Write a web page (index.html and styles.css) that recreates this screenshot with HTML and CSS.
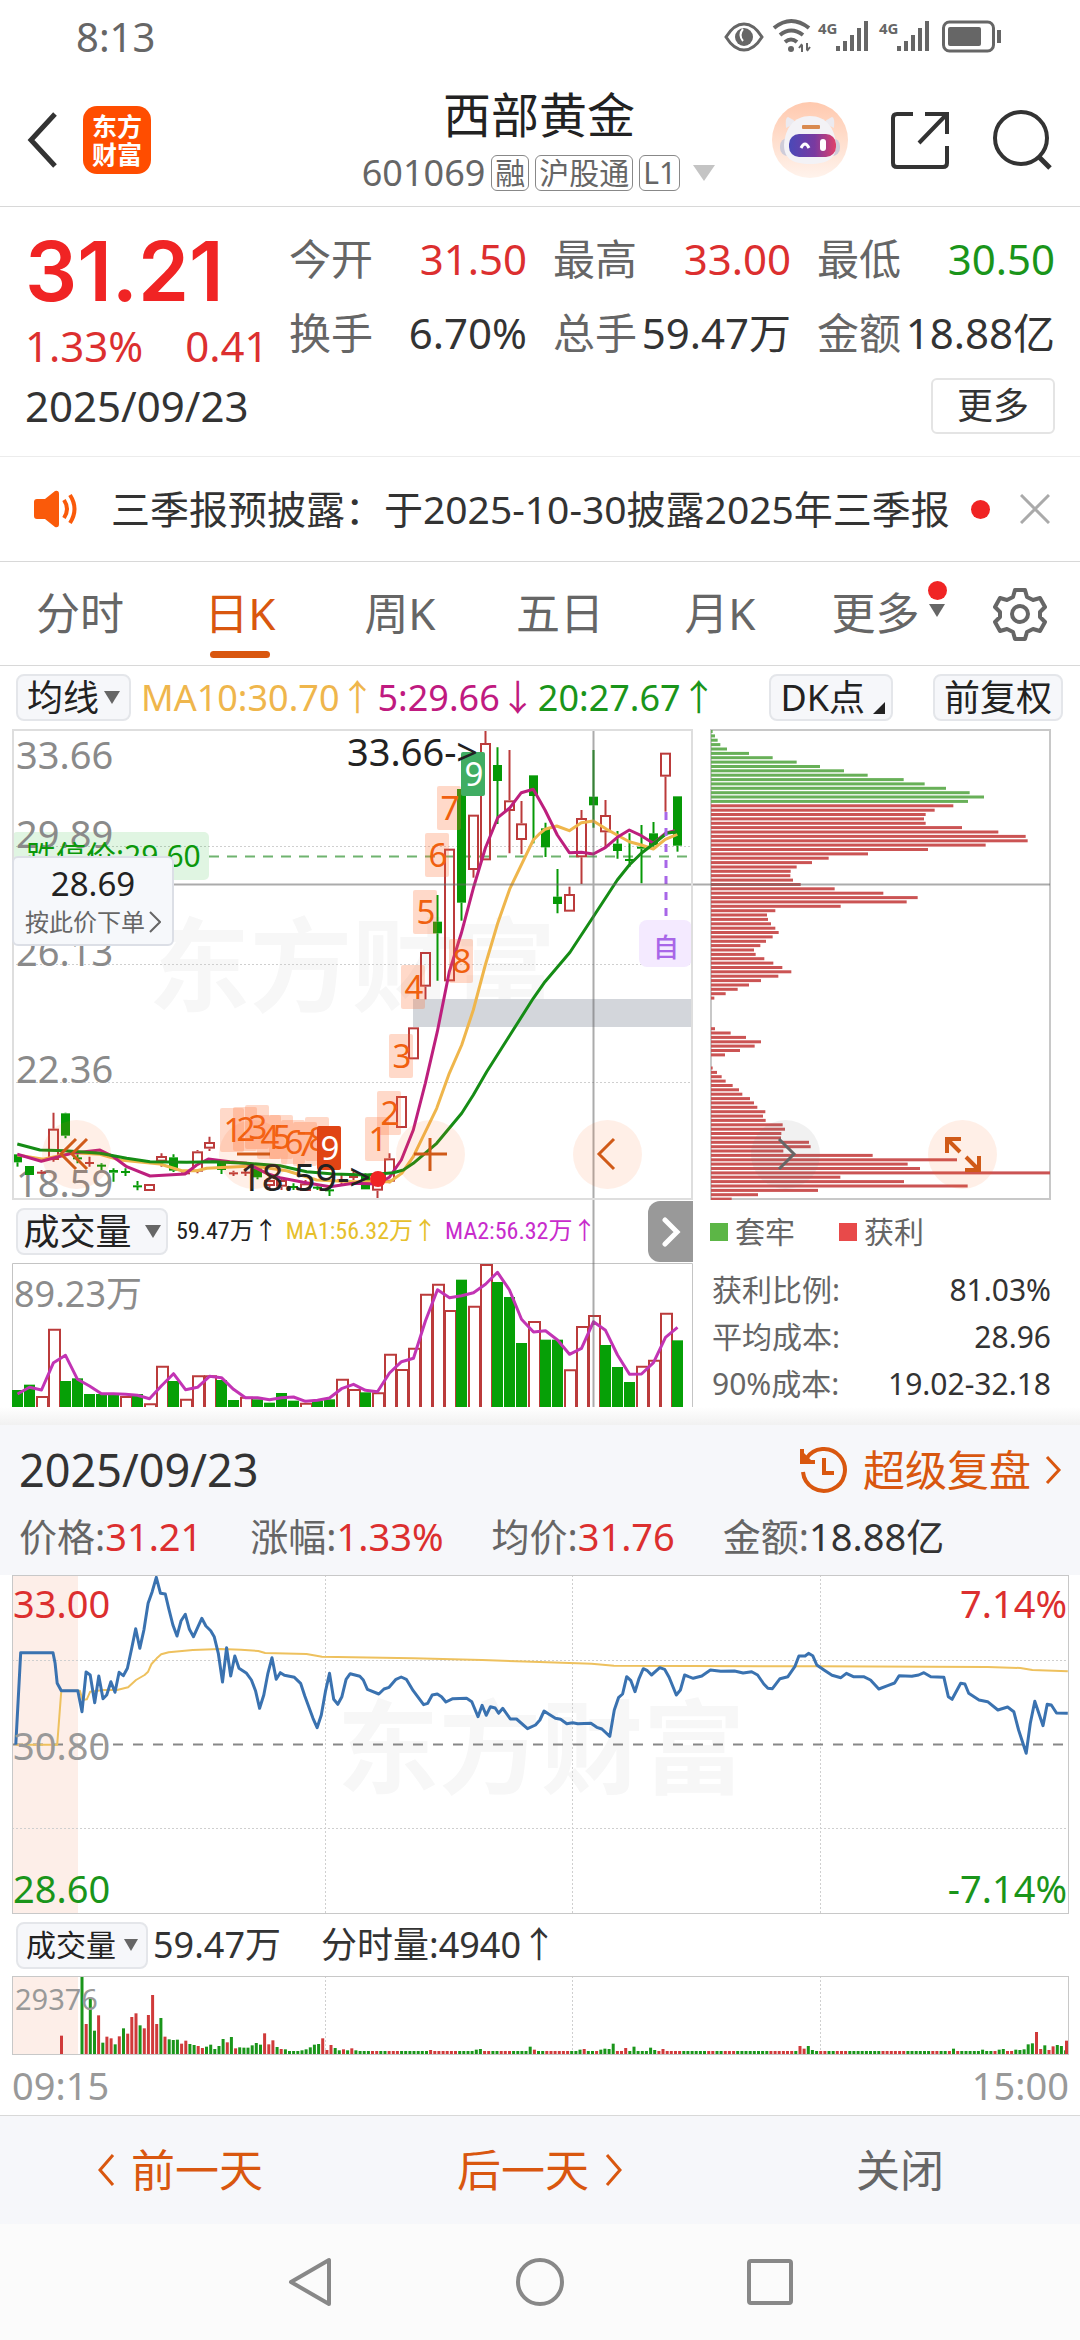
FILE: index.html
```html
<!DOCTYPE html>
<html lang="zh-CN">
<head>
<meta charset="utf-8">
<meta name="viewport" content="width=device-width, initial-scale=1">
<title>西部黄金 601069</title>
<link rel="stylesheet" href="styles.css">
</head>
<body>
<div class="status">
  <span class="status-time">8:13</span>
  <svg class="status-icons" width="278" height="40" viewBox="724 17 278 40" fill="none" stroke="#666" stroke-width="3">
    <path d="M726 37Q734 24 744 24T762 37Q754 50 744 50T726 37Z"/><circle cx="744" cy="37" r="9" fill="#666" stroke="none"/><path d="M743 29q-5 6 0 12" stroke="#fff" stroke-width="2"/>
    <path d="M774 28q17-14 35 0M780 35q11-9 23 0M785 42q6-5 12 0" stroke-width="4"/><circle cx="791" cy="49" r="3" fill="#666" stroke="none"/><path d="M802 45v7m-3-4 3-4M807 43v7m3-3-3 4" stroke-width="2"/>
    <path d="M838 46v5M845 41v10M852 35v16M859 28v23M866 21v30" stroke-width="4"/>
    <path d="M899 46v5M906 41v10M913 35v16M920 28v23M927 21v30" stroke-width="4"/>
    <g fill="#666" stroke="none" font-size="15" font-weight="700"><text x="818" y="34">4G</text><text x="879" y="34">4G</text></g>
    <rect x="943.500" y="22" width="50" height="29" rx="6"/><rect x="948" y="27" width="33" height="19" rx="2" fill="#666" stroke="none"/><path d="M999 30v13" stroke-width="4"/>
  </svg>
</div>

<header class="head">
  <button class="icon-btn back" aria-label="返回"><svg width="34" height="58" viewBox="0 0 34 58" fill="none" stroke="#333" stroke-width="5"><path d="M29 3 5 29l24 26"/></svg></button>
  <a class="logo" href="#">东方<br>财富</a>
  <div class="title">
    <h1>西部黄金</h1>
    <div class="sub"><span class="code">601069</span><span class="tag">融</span><span class="tag">沪股通</span><span class="tag">L1</span><svg width="24" height="16" viewBox="0 0 24 16"><path d="M1 0h22L12 16z" fill="#c4c4c4"/></svg></div>
  </div>
  <div class="head-actions">
    <button class="icon-btn" aria-label="智能助手"><svg width="76" height="76" viewBox="0 0 76 76">
      <defs><linearGradient id="bg" x1="0" y1="0" x2="0" y2="1"><stop offset="0" stop-color="#ffc9ae"/><stop offset="1" stop-color="#fff3ec"/></linearGradient><linearGradient id="face" x1="0" y1="0" x2="1" y2="0"><stop offset="0" stop-color="#4a49b8"/><stop offset=".55" stop-color="#7a3aa0"/><stop offset="1" stop-color="#e0406a"/></linearGradient></defs>
      <circle cx="38" cy="38" r="38" fill="url(#bg)"/>
      <path d="M14 26q-1-11 2-11 5 2 8 6zM62 26q1-11-2-11-5 2-8 6z" fill="#eceaf0"/>
      <rect x="8" y="36" width="60" height="18" rx="8" fill="#cfccd9"/>
      <path d="M38 14c16 0 25 12 26 29 0 13-8 19-26 19s-26-6-26-19c1-17 10-29 26-29z" fill="#f3f2f6"/>
      <rect x="30" y="23" width="18" height="4" rx="1" fill="#d98a50"/>
      <rect x="17" y="32" width="47" height="23" rx="10" fill="url(#face)"/>
      <path d="M29 46q4-8 8 0" fill="none" stroke="#fff" stroke-width="3"/><rect x="48" y="37" width="6" height="12" rx="3" fill="#fff"/>
    </svg></button>
    <button class="icon-btn" aria-label="分享"><svg width="60" height="60" viewBox="0 0 60 60" fill="none" stroke="#333" stroke-width="4"><path d="M23 4H7q-4 0-4 4v45q0 4 4 4h46q4 0 4-4V36M35 4h22v20M56 5 29 33"/></svg></button>
    <button class="icon-btn" aria-label="搜索"><svg width="60" height="60" viewBox="0 0 60 60" fill="none" stroke="#333" stroke-width="4"><circle cx="29" cy="28" r="26"/><path d="m47 47 11 11" stroke-width="5"/></svg></button>
  </div>
</header>

<section class="quote">
  <div class="quote-main">
    <div>
      <div class="price">31.21</div>
      <div class="change"><span>1.33%</span><span>0.41</span></div>
    </div>
    <dl class="facts">
      <div><dt>今开</dt><dd class="up">31.50</dd></div>
      <div><dt>最高</dt><dd class="up">33.00</dd></div>
      <div><dt>最低</dt><dd class="down">30.50</dd></div>
      <div><dt>换手</dt><dd>6.70%</dd></div>
      <div><dt>总手</dt><dd>59.47万</dd></div>
      <div><dt>金额</dt><dd>18.88亿</dd></div>
    </dl>
  </div>
  <div class="quote-foot"><time>2025/09/23</time><button class="more">更多</button></div>
</section>

<section class="news">
  <svg width="46" height="38" viewBox="0 0 46 38"><path d="M1 12q0-3 3-3h8L22 1q4-1 4 3v30q0 4-4 3l-10-8H4q-3 0-3-3z" fill="#fa5a0a"/><path d="M31 10q6 9 0 18M37 5q9 14 0 28" fill="none" stroke="#fa5a0a" stroke-width="4"/></svg>
  <a href="#">三季报预披露：于2025-10-30披露2025年三季报</a>
  <i class="dot"></i>
  <button class="icon-btn" aria-label="关闭公告"><svg width="30" height="30" viewBox="0 0 30 30"><path d="m1 1 28 28M29 1 1 29" stroke="#aaa" stroke-width="3"/></svg></button>
</section>

<nav class="tabs">
  <button>分时</button><button class="on">日K</button><button>周K</button><button>五日</button><button>月K</button>
  <button class="tab-more">更多<span class="marks"><i class="dot"></i><svg width="16" height="13" viewBox="0 0 16 13"><path d="M0 0h16L8 13z" fill="#666"/></svg></span></button>
  <button aria-label="设置"><svg width="54" height="54" viewBox="0 0 54 54" fill="none" stroke="#666" stroke-width="4" stroke-linejoin="round"><path d="M22 3h10l2 7 6 3 7-2 5 9-5 5v5l5 5-5 9-7-2-6 3-2 7H22l-2-7-6-3-7 2-5-9 5-5v-5l-5-5 5-9 7 2 6-3z"/><circle cx="27" cy="27" r="8"/></svg></button>
</nav>

<div class="ma">
  <button class="chip">均线<svg width="16" height="13" viewBox="0 0 16 13"><path d="M0 0h16L8 13z" fill="#666"/></svg></button>
  <span class="ma-values"><span class="c10">MA10:30.70↑</span><span class="c5">5:29.66↓</span><span class="c20">20:27.67↑</span></span>
  <button class="chip dk">DK点<svg width="12" height="12" viewBox="0 0 12 12"><path d="M12 0v12H0z" fill="#222"/></svg></button>
  <button class="chip">前复权</button>
</div>

<section class="kline">
  <div class="k-left">
    <div class="plot">
      <svg class="chart k-chart" viewBox="0 0 681 471">
        <text class="watermark" x="136" y="275">东方财富</text>
        <path d="M0 117.500H680M0 235.500H680M0 353.500H680" class="grid"/>
        <rect x="0" y="103" width="197" height="48" rx="5" fill="#00aa10" fill-opacity=".12"/>
        <path d="M197 127.500H678" stroke="#6fb36f" stroke-width="2" stroke-dasharray="10 8"/>
        <rect x="401" y="270" width="279" height="28" fill="#d3d6db"/>
        <rect x="627" y="191" width="53" height="47" rx="8" fill="#f4eaff"/>
        <g class="axis"><text x="4" y="40">33.66</text><text x="4" y="119">29.89</text><text x="4" y="237">26.13</text><text x="4" y="354">22.36</text><text x="4" y="468">18.59</text></g>
        <text x="14" y="138" font-size="30" fill="#0b980b">跌停价:29.60</text>
        <g id="candles"></g>
        <g id="averages"></g>
        <path d="M654 83V187" stroke="#a866e8" stroke-width="3" stroke-dasharray="8 8"/>
        <text x="654" y="228" font-size="26" font-weight="500" text-anchor="middle" fill="#a866e8">自</text>
        <g id="tags"></g>
        <circle cx="366" cy="450" r="8" fill="#f02424"/>
        <g font-size="38" fill="#222"><text x="335" y="37">33.66-&gt;</text><text x="228" y="462">18.59-&gt;</text></g>
        <path d="M161 155.500H1038M581.500 0V678" stroke="#666" stroke-opacity=".55" stroke-width="2"/>
        <rect x="1" y="1" width="679" height="469" fill="none" stroke="#dedede" stroke-width="2"/>
      </svg>
      <button class="order"><b>28.69</b><span>按此价下单<svg width="12" height="22" viewBox="0 0 12 22"><path d="m1 1 10 10L1 21" fill="none" stroke="#666" stroke-width="2"/></svg></span></button>
      <button class="round r1" aria-label="最早"><svg viewBox="0 0 69 69"><path d="M34 19 19 34l15 15M45 19 30 34l15 15"/></svg></button>
      <button class="round r2" aria-label="缩小"><svg viewBox="0 0 69 69"><path d="M18 34h33"/></svg></button>
      <button class="round r3" aria-label="放大"><svg viewBox="0 0 69 69"><path d="M18 34h33M34 18v33"/></svg></button>
      <button class="round r4" aria-label="向左"><svg viewBox="0 0 69 69"><path d="M41 19 26 34l15 15"/></svg></button>
    </div>
    <div class="vol-info">
      <button class="chip wide">成交量<svg width="16" height="13" viewBox="0 0 16 13"><path d="M0 0h16L8 13z" fill="#666"/></svg></button>
      <span>59.47万↑</span><span class="v1">MA1:56.32万↑</span><span class="v2">MA2:56.32万↑</span>
      <button class="next" aria-label="下一项"><svg width="20" height="30" viewBox="0 0 20 30"><path d="m4 3 12 12L4 27" fill="none" stroke="#fff" stroke-width="5" stroke-linecap="round"/></svg></button>
    </div>
    <svg class="chart" viewBox="0 0 681 144">
      <path d="M.5 144V.5H680.500V144" fill="none" stroke="#c4c4c4"/>
      <text x="2" y="44" font-size="36" fill="#8c8c8c">89.23万</text>
      <g id="volumes"></g>
    </svg>
  </div>
  <div class="k-right">
    <div class="plot">
      <svg class="chart" viewBox="0 0 341 471">
        <rect x="1" y="1" width="339" height="469" fill="none" stroke="#c8c8c8" stroke-width="2"/>
        <g id="chips"></g>
      </svg>
      <button class="round r5" aria-label="向右"><svg viewBox="0 0 69 69"><path d="m28 19 15 15-15 15"/></svg></button>
      <button class="round r6" aria-label="全屏"><svg viewBox="0 0 69 69"><path d="M19 33V19h14M20 20l12 12M51 36v14H37M50 49 38 37" stroke-width="4"/></svg></button>
    </div>
    <div class="legend"><span><i class="sq g"></i>套牢</span><span><i class="sq r"></i>获利</span></div>
    <dl class="costs">
      <div><dt>获利比例:</dt><dd>81.03%</dd></div>
      <div><dt>平均成本:</dt><dd>28.96</dd></div>
      <div><dt>90%成本:</dt><dd>19.02-32.18</dd></div>
    </dl>
  </div>
</section>

<div class="fade"></div>
<section class="day">
  <div class="day-top">
    <time>2025/09/23</time>
    <a href="#"><svg width="50" height="50" viewBox="0 0 50 50" fill="none" stroke="#d9570f" stroke-width="4"><path d="M7 14A21 21 0 1 1 4 27"/><path d="M3 4v13h13" /><path d="M25 13v15h10"/><path d="M3 6v11h11z" fill="#d9570f" stroke="none"/></svg>超级复盘<svg width="17" height="30" viewBox="0 0 17 30"><path d="m2 2 12 13L2 28" fill="none" stroke="#d9570f" stroke-width="3"/></svg></a>
  </div>
  <div class="day-stats"><span>价格:<b class="up">31.21</b></span><span>涨幅:<b class="up">1.33%</b></span><span>均价:<b class="up">31.76</b></span><span>金额:<b>18.88亿</b></span></div>
</section>

<section class="intraday">
  <svg class="chart" viewBox="0 0 1057 339">
    <rect x="1" y="1" width="65" height="337" fill="#fdeee8"/>
    <text class="watermark" x="325" y="211">东方财富</text>
    <path d="M313.500 0V338M560.500 0V338M808.500 0V338M0 85.500H1056M0 253.500H1056" class="grid"/>
    <path d="M1 169.500H1056" stroke="#888" stroke-width="2" stroke-dasharray="10 10"/>
    <g id="minutes"></g>
    <rect x=".5" y=".5" width="1056" height="338" fill="none" stroke="#c8c8c8"/>
    <g font-size="38"><text x="1" y="43" fill="#dc2f2f">33.00</text><text x="1" y="185" fill="#999">30.80</text><text x="1" y="328" fill="#1a951a">28.60</text>
    <g text-anchor="end"><text x="1055" y="43" fill="#dc2f2f">7.14%</text><text x="1055" y="328" fill="#1a951a">-7.14%</text></g></g>
  </svg>
  <div class="day-vol"><button class="chip small">成交量<svg width="14" height="12" viewBox="0 0 14 12"><path d="M0 0h14L7 12z" fill="#666"/></svg></button><span>59.47万</span><span class="tick">分时量:4940↑</span></div>
  <svg class="chart" viewBox="0 0 1057 79">
    <rect x="1" y="1" width="65" height="77" fill="#fdeee8"/>
    <path d="M313.500 0V78M560.500 0V78M808.500 0V78" class="grid"/>
    <g id="ticks"></g>
    <text x="3" y="34" font-size="29" fill="#999">29376</text>
    <rect x=".5" y=".5" width="1056" height="78" fill="none" stroke="#c8c8c8"/>
  </svg>
  <div class="times"><span>09:15</span><span>15:00</span></div>
</section>

<footer class="pager">
  <button><svg width="18" height="34" viewBox="0 0 18 34"><path d="M16 2 3 17l13 15" fill="none" stroke="#d9570f" stroke-width="3"/></svg>前一天</button>
  <button>后一天<svg width="18" height="34" viewBox="0 0 18 34"><path d="m2 2 13 15L2 32" fill="none" stroke="#d9570f" stroke-width="3"/></svg></button>
  <button class="close">关闭</button>
</footer>
<nav class="sysnav">
  <button class="icon-btn" aria-label="系统返回"><svg width="50" height="50" viewBox="0 0 50 50" fill="none" stroke="#888" stroke-width="4" stroke-linejoin="round"><path d="M44 3v44L6 25z"/></svg></button>
  <button class="icon-btn" aria-label="主页"><svg width="50" height="50" viewBox="0 0 50 50" fill="none" stroke="#888" stroke-width="4"><circle cx="25" cy="25" r="22"/></svg></button>
  <button class="icon-btn" aria-label="最近任务"><svg width="50" height="50" viewBox="0 0 50 50" fill="none" stroke="#888" stroke-width="4"><rect x="4" y="4" width="42" height="42" rx="2"/></svg></button>
</nav>
<script src="charts.js"></script>
</body>
</html>
```

FILE: styles.css
```css
* { box-sizing: border-box; }
body { margin: 0; background: #fff; color: #333; font-family: "Noto Sans", "Noto Sans CJK SC", sans-serif; line-height: 1.2; }
button { border: 0; background: none; padding: 0; margin: 0; font: inherit; color: inherit; }
a { color: inherit; text-decoration: none; }
svg { display: block; flex: none; }
h1, dl, dd, dt { margin: 0; font-weight: 400; }
b { font-weight: 400; }
.up { color: #dc2f2f; }
.down { color: #1a951a; }
.icon-btn { display: block; }
.dot { display: block; width: 19px; height: 19px; border-radius: 50%; background: #f02424; flex: none; }

.status { display: flex; align-items: center; justify-content: space-between; height: 74px; padding: 0 78px 0 76px; color: #666; font-size: 40px; }

.head { display: grid; grid-template-columns: 1fr auto 1fr; align-items: center; height: 133px; padding: 0 28px 0 26px; border-bottom: 1px solid #d8d8d8; }
.back { grid-column: 1; grid-row: 1; justify-self: start; }
.logo { grid-column: 1; grid-row: 1; margin-left: 57px; justify-self: start; display: grid; place-content: center; width: 68px; height: 68px; border-radius: 14px; background: #ff4d00; color: #fff; font-size: 25px; line-height: 28px; font-weight: 700; }
.title { grid-column: 2; text-align: center; }
.title h1 { font-size: 48px; line-height: 60px; color: #222; }
.sub { display: flex; align-items: center; gap: 6px; margin-top: 6px; height: 44px; font-size: 30px; color: #666; }
.code { font-size: 36px; }
.tag { border: 1px solid #888; border-radius: 6px; line-height: 34px; padding: 0 3px; }
.sub svg { margin-left: 6px; }
.head-actions { grid-column: 3; justify-self: end; display: flex; align-items: center; gap: 42px; }

.quote { padding: 23px 25px 22px 25px; border-bottom: 1px solid #ececec; font-size: 42px; line-height: 50px; }
.quote-main { display: grid; grid-template-columns: 264fr 766fr; }
.price { font-family: Inter, sans-serif; font-weight: 600; font-size: 82px; line-height: 84px; color: #f02424; }
.change { display: flex; gap: 42px; margin-top: 7px; color: #dc2f2f; }
.facts { display: grid; grid-template-columns: repeat(3, 1fr); gap: 24px 26px; padding-top: 4px; align-content: start; }
.facts div { display: flex; justify-content: space-between; white-space: nowrap; }
.facts dt { color: #666; }
.quote-foot { display: flex; justify-content: space-between; align-items: center; margin-top: 7px; }
.more { width: 124px; height: 56px; border: 2px solid #e4e4e4; border-radius: 6px; font-size: 36px; line-height: 50px; }

.news { display: flex; align-items: center; height: 105px; padding: 0 30px 0 33px; border-bottom: 1px solid #d8d8d8; }
.news a { flex: 1; margin-left: 32px; font-size: 39px; white-space: nowrap; }
.news .icon-btn { margin-left: 30px; }

.tabs { display: grid; grid-template-columns: repeat(6, 4fr) 3fr; height: 104px; border-bottom: 1px solid #d8d8d8; font-size: 44px; color: #666; }
.tabs button { display: flex; align-items: center; justify-content: center; position: relative; }
.tabs .on { color: #d9570f; }
.tabs .on::after { content: ""; position: absolute; left: 50%; bottom: 7px; width: 60px; height: 7px; margin-left: -30px; border-radius: 4px; background: #d9570f; }
.tabs .tab-more { gap: 8px; padding-left: 18px; }
.marks { display: grid; justify-items: center; gap: 4px; padding-bottom: 30px; }

.chip { display: flex; align-items: center; justify-content: center; gap: 5px; height: 47px; padding: 0 8px; border: 2px solid #e4e6ea; border-radius: 8px; background: #f6f7fa; color: #222; font-size: 36px; line-height: 40px; white-space: nowrap; }
.ma { display: flex; align-items: center; height: 63px; padding: 0 17px 0 16px; }
.ma .chip { padding: 0 9px; }
.ma-values { display: flex; flex: 1; gap: 2px; margin-left: 10px; font-size: 36px; white-space: nowrap; }
.c10 { color: #efb64c; }
.c5 { color: #c01a80; }
.c20 { color: #1a951a; }
.ma .dk { margin-right: 40px; gap: 8px; padding-right: 6px; }
.dk svg { align-self: flex-end; margin-bottom: 5px; }

.kline { display: grid; grid-template-columns: 681fr 341fr; gap: 17px; padding: 0 29px 0 12px; }
.chart { width: 100%; height: auto; }
.k-chart { overflow: visible; position: relative; z-index: 1; }
.plot { position: relative; }
.grid { fill: none; stroke: #cfcfcf; stroke-dasharray: 2 2; }
.axis { font-size: 38px; fill: #8a8a8a; }
.watermark { font-size: 102px; font-weight: 700; fill: #f7f7f7; }
.order { position: absolute; z-index: 2; left: 0; top: 27%; width: 162px; height: 90px; border: 2px solid #dcdfe6; border-radius: 6px; background: #f6f8fb; color: #666; font-size: 24px; line-height: 34px; }
.order b { display: block; color: #222; font-size: 33px; line-height: 42px; }
.order span { display: flex; align-items: center; justify-content: center; gap: 4px; }
.round { position: absolute; z-index: 2; top: 83%; width: 69px; height: 69px; margin-left: -34px; border-radius: 50%; background: rgba(255, 100, 20, .1); fill: none; stroke: #d05a18; stroke-width: 3; }
.r1 { left: 9.4%; }
.r2 { left: 35.4%; }
.r3 { left: 61.4%; }
.r4 { left: 87.4%; }
.r5 { left: 22%; background: rgba(120, 120, 120, .1); stroke: #666; }
.r6 { left: 74%; }

.vol-info { display: flex; align-items: center; gap: 8px; height: 63px; padding-left: 4px; font-size: 24px; color: #222; white-space: nowrap; }
.vol-info span { font-family: "Roboto Condensed", "Liberation Sans Narrow", Roboto, "Noto Sans CJK SC", sans-serif; }
.wide { width: 152px; gap: 13px; padding: 0 6px; }
.v1 { color: #e6c02c; }
.v2 { color: #c82ccc; }
.next { display: grid; place-content: center; width: 45px; height: 61px; margin-left: auto; border-radius: 12px 0 0 12px; background: #999; }

.legend { display: flex; height: 63px; align-items: center; gap: 44px; font-size: 30px; color: #666; }
.legend span { display: flex; align-items: center; gap: 7px; }
.sq { width: 18px; height: 18px; }
.g { background: #5cb646; }
.r { background: #e84a4a; }
.costs { padding: 3px 0 0 2px; font-size: 30px; line-height: 47px; }
.costs div { display: flex; justify-content: space-between; }
.costs dt { color: #666; }

.fade { height: 18px; background: linear-gradient(#fff, #f1f1f1); }
.day { background: #f6f7fa; height: 150px; padding: 15px 18px 0 19px; }
.day-top { display: flex; justify-content: space-between; align-items: center; height: 60px; font-size: 45px; }
.day-top a { display: flex; align-items: center; font-size: 42px; color: #d9570f; gap: 14px; }
.day-stats { display: flex; gap: 48px; font-size: 38px; line-height: 60px; margin-top: 6px; color: #666; white-space: nowrap; }
.day-stats b { color: #333; }
.day-stats .up { color: #dc2f2f; }

.intraday { padding: 0 11px 0 12px; }
.day-vol { display: flex; align-items: center; height: 62px; padding-left: 4px; font-size: 36px; }
.day-vol .small { font-size: 30px; width: 132px; margin-right: 5px; gap: 8px; }
.tick { margin-left: 40px; }
.times { display: flex; justify-content: space-between; height: 60px; line-height: 60px; font-size: 38px; color: #999; }

.pager { display: grid; grid-template-columns: repeat(3, 1fr); height: 109px; border-top: 1px solid #d8d8d8; background: #f6f7fa; font-size: 44px; color: #d9570f; }
.pager button { display: flex; align-items: center; justify-content: center; gap: 16px; }
.pager .close { color: #666; }
.sysnav { display: flex; align-items: center; justify-content: center; gap: 180px; height: 116px; background: #fbfbfb; }
```

FILE: charts.js
```js
const NS = "http://www.w3.org/2000/svg";
const RED = "#bb3b3b", GREEN = "#069906";

function add(id, name, attrs, text) {
  const el = document.createElementNS(NS, name);
  for (const key in attrs) el.setAttribute(key, attrs[key]);
  if (text) el.textContent = text;
  document.getElementById(id).appendChild(el);
}
function line(id, pts, sx, ox, sy, oy, stroke, width) {
  const out = [];
  for (let i = 0; i < pts.length; i += 2) {
    out.push((pts[i] / sx - ox).toFixed(1) + "," + (pts[i + 1] / sy - oy).toFixed(1));
  }
  add(id, "polyline", { points: out.join(" "), fill: "none", stroke: stroke, "stroke-width": width, "stroke-linejoin": "round" });
}

/* Daily candles: rising flag, high, body top, body bottom, low (sub-pixel steps of 1/3). */
const days = [
  [0,1303,1303,1327,1340],[0,1338,1338,1365,1365],[1,1350,1355,1359,1362],[1,1178,1226,1320,1325],
  [0,1178,1180,1247,1255],[0,1300,1312,1318,1330],[1,1310,1326,1332,1340],[0,1330,1334,1338,1350],
  [0,1345,1350,1358,1385],[0,1345,1353,1358,1368],[0,1383,1396,1400,1411],[1,1392,1392,1413,1413],
  [1,1300,1308,1325,1340],[0,1303,1312,1352,1356],[1,1355,1357,1361,1363],[1,1290,1294,1355,1360],
  [1,1250,1266,1286,1293],[0,1322,1326,1350,1362],[1,1352,1357,1361,1368],[1,1345,1355,1360,1368],
  [0,1340,1345,1372,1378],[1,1375,1380,1398,1404],[1,1376,1380,1400,1410],[0,1390,1398,1402,1410],
  [1,1380,1390,1413,1413],[0,1395,1400,1404,1410],[0,1400,1408,1412,1428],[1,1365,1378,1382,1395],
  [1,1355,1368,1372,1380],[0,1360,1368,1408,1408],[1,1378,1380,1412,1438],[1,1300,1315,1385,1390],
  [1,1128,1128,1224,1224],[1,922,922,1018,1018],[1,696,696,800,838],[0,525,605,640,782],
  [1,386,386,784,784],[0,207,207,548,602],[1,284,284,450,473],[1,27,69,421,421],
  [0,82,135,183,312],[1,90,241,273,400],[1,243,310,360,402],[0,166,166,228,370],
  [0,308,325,382,411],[0,447,530,552,580],[1,500,522,575,575],[1,270,294,412,492],
  [0,90,230,256,323],[1,240,285,337,383],[0,333,371,393,416],[0,340,417,423,440],
  [0,315,380,386,490],[0,306,340,375,380],[1,98,98,170,275],[0,229,229,377,395]
];
days.forEach(function (d, i) {
  const x = 5.5 + 12 * i, y = d.slice(1).map(function (v) { return v / 3 - 9; });
  const color = d[0] ? RED : GREEN, body = y[2] - y[1];
  add("candles", "path", { d: "M" + x + " " + y[0] + "V" + y[1] + "M" + x + " " + y[2] + "V" + y[3], stroke: color, "stroke-width": 2 });
  if (d[0] && body > 4) {
    add("candles", "rect", { x: x - 4.5, y: y[1] + 1, width: 9, height: body - 2, fill: "none", stroke: color, "stroke-width": 2 });
  } else {
    add("candles", "rect", { x: x - 4.5, y: y[1], width: 9, height: Math.max(body, 2), fill: color });
  }
});

line("averages", [52,1305,130,1318,220,1298,300,1303,360,1320,480,1332,545,1352,590,1352,620,1345,760,1338,860,1352,950,1380,1060,1385,1170,1385,1205,1360,1240,1310,1310,1165,1348,1060,1385,975,1420,870,1456,735,1493,610,1530,505,1600,360,1620,340,1635,328,1670,318,1708,332,1744,308,1780,303,1820,328,1888,365,1924,375,1960,387,1996,358,2032,343], 3, 12, 3, 9, "#efb64c", 3);
line("averages", [52,1303,124,1324,215,1300,300,1290,340,1310,380,1340,450,1368,555,1362,590,1335,625,1317,690,1325,740,1330,800,1360,840,1373,910,1387,990,1400,1060,1390,1130,1392,1168,1372,1204,1320,1240,1230,1276,1090,1312,935,1348,755,1384,640,1420,505,1456,385,1493,293,1530,263,1564,218,1600,208,1635,270,1672,345,1708,398,1744,397,1780,402,1816,383,1852,352,1888,330,1924,347,1960,370,1996,340,2025,332], 3, 12, 3, 9, "#bd1f7d", 3);
line("averages", [52,1272,120,1290,196,1292,300,1300,380,1315,450,1325,560,1327,640,1325,740,1330,840,1337,920,1355,1000,1362,1100,1365,1180,1358,1210,1350,1240,1330,1310,1270,1385,1180,1420,1125,1460,1055,1530,945,1600,835,1635,785,1710,697,1780,590,1852,480,1888,435,1924,400,1960,372,2000,340,2030,335], 3, 12, 3, 9, "#158c15", 3);

/* Sequence counters: label, left, top, style. */
const tags = [
  [1,208,379],[2,221,378],[3,233,376],[4,245,386],[5,257,386],[6,269,391],[7,281,393],[8,293,388],[9,305,397,"#e04414"],
  [1,353,388],[2,365,362],[3,377,305],[4,389,236],[5,401,161],[6,413,104],[7,425,57],[8,437,210],[9,449,23,"#40ad63"]
];
tags.forEach(function (t) {
  add("tags", "rect", { x: t[1], y: t[2], width: 24, height: 44, rx: 2, fill: t[3] || "#ff6c30", "fill-opacity": t[3] ? 1 : .26 });
  add("tags", "text", { x: t[1] + 13, y: t[2] + 34, "font-size": 33, "text-anchor": "middle", fill: t[3] ? "#fff" : "#f0600f" }, String(t[0]));
});

/* Chip distribution by price level. */
const chips = [38,45,53,61,81,147,218,290,360,432,503,611,674,738,809,852,804,760,704,677,672,677,786,895,977,983,857,684,504,386,336,290,272,271,279,302,404,550,653,620,422,226,201,204,213,226,236,218,198,181,162,167,193,220,247,274,235,183,147,113,77,43,0,0,0,0,0,0,45,92,138,183,164,120,75,0,0,38,51,65,77,98,117,127,150,162,172,196,189,197,248,255,244,243,327,332,250,518,771,623,660,1050,421,612,803,354,174,95];
chips.forEach(function (v, i) {
  if (v) add("chips", "rect", { x: 1, y: (i * 4.37 + 1).toFixed(1), width: (v - 33) / 3, height: 3, fill: i < 17 ? "#68b058" : "#cb5454" });
});

/* Daily volume: bar tops and moving average. */
const vols = "g600 g584 r618 r416 g573 g565 g612 g612 g612 r618 g612 r640 r527 g573 r626 r556 r556 g570 g630 r620 g628 g638 g609 g632 r638 g632 g628 r566 r597 g607 r607 r491 r537 r473 r311 r281 r360 g269 r347 r222 g276 g321 g459 r393 g449 g449 r538 r408 r375 g465 g531 g576 r527 r509 r368 g451".split(" ");
vols.forEach(function (v, i) {
  const x = 12 * i, y = v.slice(1) / 3 - 73;
  if (v[0] === "r") add("volumes", "path", { d: "M" + (x + 1) + " 144V" + (y + 1) + "H" + (x + 12) + "V144", fill: "none", stroke: RED, "stroke-width": 2 });
  else add("volumes", "rect", { x: x, y: y, width: 11, height: 144 - y, fill: "#06a006" });
});
const volMa = [612,592,600,518,496,568,588,611,611,613,616,626,587,551,599,592,559,563,598,623,623,629,623,621,634,631,624,596,583,601,605,549,515,505,392,299,323,317,308,283,247,300,388,426,422,450,493,475,395,421,495,553,552,518,442,412];
line("volumes", volMa.flatMap(function (v, i) { return [5.5 + 12 * i, v]; }), 1, 0, 3, 73, "#c234b4", 3);

/* Minute prices and their running average. */
line("minutes", [46,524,166,524,178,362,232,362,240,390,252,388,262,365,300,360,340,360,372,352,395,330,420,315,430,305,440,282,455,265,468,253,490,247,560,240,640,237,700,239,750,243,770,249,890,252,935,260,1200,265,1400,270,1568,276,1718,281,1783,287,2368,289,2868,291,2963,294,2998,300,3101,304], 2.904, 12, 3, 5, "#eec15e", 2);
line("minutes", [46,524,60,248,154,248,160,280,166,340,178,362,226,362,238,425,250,306,262,315,275,398,287,318,299,386,310,375,322,335,334,367,346,307,358,317,370,295,382,238,394,176,406,235,418,180,430,100,442,65,454,22,466,70,480,72,490,115,502,165,514,198,526,152,538,133,550,178,562,200,574,172,586,145,598,168,612,182,622,200,634,250,646,336,658,233,670,318,682,258,694,295,716,310,730,330,742,362,754,415,766,375,778,310,790,263,802,328,814,308,826,316,855,322,873,340,885,378,909,445,921,473,933,435,945,365,957,310,969,388,981,403,993,380,1005,328,1017,311,1045,319,1055,330,1067,358,1100,372,1115,357,1130,352,1150,328,1165,321,1180,328,1200,362,1230,404,1242,400,1255,375,1270,372,1282,380,1295,396,1315,386,1355,385,1370,395,1388,440,1400,406,1412,436,1424,410,1438,414,1448,430,1460,415,1482,447,1500,447,1532,476,1555,465,1568,450,1580,423,1593,432,1613,445,1628,448,1646,461,1663,458,1678,461,1716,460,1733,472,1748,477,1771,499,1784,420,1796,383,1808,372,1820,320,1832,332,1844,365,1856,325,1868,296,1880,302,1892,315,1916,293,1930,298,1943,322,1964,375,1976,360,1988,315,2000,320,2013,325,2038,318,2063,300,2093,304,2133,303,2158,309,2183,305,2200,315,2218,342,2230,355,2243,356,2265,326,2288,320,2308,290,2320,258,2338,258,2348,250,2360,257,2372,285,2393,300,2416,316,2442,323,2458,310,2478,320,2508,320,2528,330,2552,357,2578,347,2598,339,2611,317,2648,319,2668,315,2683,308,2703,320,2741,322,2754,380,2765,388,2790,340,2802,342,2813,370,2843,390,2868,395,2898,420,2926,411,2944,425,2958,480,2980,550,2992,460,3005,394,3029,467,3041,403,3053,405,3068,429,3101,430], 2.904, 12, 3, 5, "#3a72b0", 3);

/* Minute volume: quiet minutes share one low bar height; busy ones are listed by slot. */
const opening = "g201 r342 g265 g362 r316 g398 r380 r385 g403 r379 g355 r371 r321 r310 g346 r355 r315 r255 r342 g324 r380 g388 g390 g389 r401 r392 g402 g405 r408 r414 g410 g404 g417 g408 g387 r397 g381 r415 g412 g413 g413 g406 g399 g404 r370 r403 r391 g411 r417 g418 g423 g423 g423 g421 g418 g412 g404 g402 r385 r420 r405 g414 g421 r418 g421 r415 g421".split(" ");
const busy = { 84:"r420", 95:"g419", 96:"g417", 108:"g410", 109:"r419", 120:"g419", 121:"r417", 125:"g419", 126:"g416", 127:"g417", 128:"g401", 131:"r414", 133:"g410", 137:"g413", 138:"g420", 140:"r417", 173:"r408", 174:"r416", 175:"g408", 176:"g420", 210:"g416", 217:"g419", 221:"g419", 222:"g417", 225:"g419", 226:"g420", 227:"g418", 228:"g403", 229:"g400", 230:"r366", 231:"r417", 232:"g406", 233:"r420", 234:"r409", 235:"g405", 236:"g408", 237:"g421", 238:"r430" };
const quiet = "ggggrrrrrrggggggrrggrrrgggg";
function tick(x, v) {
  const y = v.slice(1) / 3 - 66;
  add("ticks", "rect", { x: x.toFixed(1), y: y, width: 3, height: 78 - y, fill: v[0] === "r" ? "#d03a3a" : "#1a951a" });
}
tick(48, "r377");
for (let i = 0; i < 239; i++) tick(68.5 + i * 4.15, opening[i] || busy[i] || quiet[i % quiet.length] + "423");
tick(1053, "r392");
```
